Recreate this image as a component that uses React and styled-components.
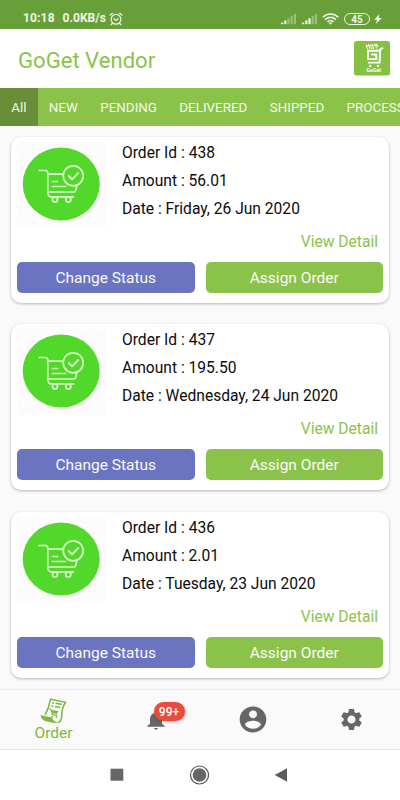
import React, { useState } from "react";
import styled, { createGlobalStyle } from "styled-components";

const GlobalStyle = createGlobalStyle`
  body {
    margin: 0;
    background: #fafafa;
    font-family: Roboto, "Liberation Sans", sans-serif;
  }

  * {
    box-sizing: border-box;
  }

  button {
    border: none;
    padding: 0;
    background: none;
    font-family: inherit;
    cursor: pointer;
  }
`;

const Screen = styled.div`
  display: flex;
  flex-direction: column;
  width: 400px;
  height: 800px;
  overflow: hidden;
  background: #fafafa;
`;

const StatusBar = styled.div`
  display: flex;
  justify-content: space-between;
  flex: none;
  height: 29px;
  padding: 8px 18px 0 23px;
  background: #689f38;
  color: #eef7e4;
  font-size: 12px;
  font-weight: 700;
  line-height: 21px;

  svg {
    display: block;
  }
`;

const StatusGroup = styled.div`
  display: flex;
  align-items: center;
  height: 21px;
`;

const Clock = styled.span`
  width: 39.5px;
  letter-spacing: 0.15px;
`;

const NetSpeed = styled.span`
  width: 46.5px;
  letter-spacing: 0.05px;
  white-space: nowrap;
`;

const Header = styled.header`
  display: flex;
  align-items: center;
  justify-content: space-between;
  flex: none;
  height: 59px;
  padding: 0 10px 0 18px;
  background: #fff;

  h1 {
    margin: 2px 0 0;
    color: #8bc34a;
    font-size: 22.1px;
    font-weight: 400;
  }
`;

const Tabs = styled.nav`
  display: flex;
  flex: none;
  height: 38px;
  overflow: hidden;
  background: #8bc34a;
`;

const Tab = styled.button`
  flex: none;
  padding: 1px 11.2px 0;
  background: ${(props) => (props.$active ? "#688f38" : "transparent")};
  color: #f3faea;
  font-size: 13.4px;
`;

const Orders = styled.main`
  display: flex;
  flex-direction: column;
  gap: 21.4px;
  flex: 1;
  min-height: 0;
  padding: 11px 11px 0;
  overflow: hidden;
`;

const Card = styled.article`
  flex: none;
  height: 166px;
  padding: 5px 6px 0;
  border-radius: 10px;
  background: #fff;
  box-shadow: 0 1px 3px rgba(0, 0, 0, 0.28);
`;

const Summary = styled.div`
  display: flex;
  height: 86px;
`;

const Thumb = styled.div`
  width: 89px;
  height: 86px;
  background: repeating-linear-gradient(
    135deg,
    #fdfdfd 0 2px,
    #fafafa 2px 3px
  );

  svg {
    display: block;
  }
`;

const Details = styled.div`
  margin: -3px 0 0 16px;
  color: #0c0c0c;
  font-size: 15.6px;
  white-space: nowrap;

  p {
    margin: 0;
    line-height: 28px;
  }
`;

const DetailLink = styled.button`
  display: block;
  margin: 0 5px 0 auto;
  height: 28px;
  color: #8bc34a;
  font-size: 15.6px;
`;

const Actions = styled.div`
  display: grid;
  grid-template-columns: 1fr 1fr;
  gap: 11px;
  margin-top: 6px;
`;

const ActionButton = styled.button`
  height: 31px;
  padding-top: 1px;
  border-radius: 5px;
  background: ${(props) => (props.$primary ? "#8bc34a" : "#6b74c1")};
  color: #fafafa;
  font-size: 15.5px;
`;

const BottomNav = styled.nav`
  display: grid;
  grid-template-columns: 107px 97px 98px 98px;
  flex: none;
  height: 61px;
  border-top: 1px solid #ececec;
  border-bottom: 1px solid #e6e6e6;
  background: #fafafa;
`;

const NavItem = styled.button`
  display: flex;
  flex-direction: column;
  align-items: center;
  justify-content: center;
  color: ${(props) => (props.$active ? "#7cbb3f" : "#666")};
  font-size: 15.5px;

  svg {
    display: block;
  }
`;

const BellWrap = styled.span`
  position: relative;
`;

const Badge = styled.span`
  position: absolute;
  left: 7px;
  top: -8px;
  width: 31px;
  height: 19px;
  border-radius: 10px;
  background: #e74c3c;
  box-shadow: 1px 1px 3px rgba(0, 0, 0, 0.25);
  color: #fff;
  font-size: 12px;
  font-weight: 500;
  line-height: 20px;
  text-align: center;
`;

const SystemBar = styled.div`
  display: flex;
  align-items: center;
  flex: none;
  gap: 65px;
  height: 50px;
  padding-left: 110px;
  background: #fff;
`;

function AlarmIcon() {
  return (
    <svg width="14" height="14" viewBox="0 0 14 14" fill="none" stroke="currentColor" strokeWidth="1.2" strokeLinecap="round">
      <circle cx="7" cy="7.3" r="4.9" />
      <path d="M1 3.2 3.4 1.3M13 3.2l-2.4-1.9M4.8 6.8 7 8.4l2.2-1.6M3.2 11.5l-1 1.2M10.8 11.5l1 1.2" />
    </svg>
  );
}

function SignalIcon({ bars }) {
  return (
    <svg width="21" height="12" viewBox="0 0 21 12" fill="currentColor">
      {[0, 1, 2, 3, 4].map((i) => (
        <rect
          key={i}
          x={1 + i * 3.2}
          y={9.6 - i * 2.2}
          width="2.2"
          height={1.6 + i * 2.2}
          opacity={i < bars ? 1 : 0.38}
        />
      ))}
    </svg>
  );
}

function WifiIcon() {
  return (
    <svg width="17" height="12" viewBox="0 0 17 12" fill="none" stroke="currentColor" strokeWidth="1.6">
      <path d="M.8 4.2a11 11 0 0 1 15.4 0M3.1 6.6a7.7 7.7 0 0 1 10.8 0M5.5 8.9a4.3 4.3 0 0 1 6 0" />
      <path d="M8.5 11.8 6.7 10a2.6 2.6 0 0 1 3.6 0z" fill="currentColor" stroke="none" />
    </svg>
  );
}

const Battery = styled.span`
  width: 26px;
  height: 12px;
  margin: 0 4px 0 5px;
  border: 1px solid #eef7e4;
  border-radius: 6px;
  background: linear-gradient(90deg, #689f38 60%, #4fb01e 60% 80%, #689f38 80%);
  font-size: 10px;
  line-height: 11px;
  text-align: center;
`;

function BoltIcon() {
  return (
    <svg width="8" height="10" viewBox="0 0 8 10" fill="currentColor">
      <path d="M5.4 0 .3 5.8h2.8L1.8 10l6-6H4.7z" />
    </svg>
  );
}

function Logo() {
  return (
    <svg width="36" height="35" viewBox="0 0 36 35">
      <rect width="36" height="34.5" rx="2.5" fill="#86c144" />
      <g fill="none" stroke="#fff">
        <path d="M29 6.9 26.2 8.3 25.6 21.6H14" strokeWidth="1.9" />
        <path d="M26 9.8H14v8.3h8.300v-4.600h-5" strokeWidth="1.9" />
        <path d="m12 3.5 1.5 4.5M14.5 3l1.3 5M16.5 5.5 18.2 8M18 2.8l1.7 5M20.5 3.2l2.5 4.5M22.6 2.8 24 6M12 5.5l3-1.5 3 .8 3-1.3 3 1.5" strokeWidth="1" />
      </g>
      <circle cx="16.2" cy="25" r="1.2" fill="#fff" />
      <circle cx="24" cy="25" r="1.2" fill="#fff" />
      <text x="19.8" y="31.3" fill="#fff" fontSize="5.2" fontWeight="700" textAnchor="middle">
        GoGet
      </text>
    </svg>
  );
}

function CartIcon() {
  return (
    <svg width="89" height="86" viewBox="0 0 89 86">
      <ellipse cx="44.2" cy="42" rx="38.5" ry="36.4" fill="#51d82a" />
      <g fill="none" stroke="#d9f7c8" strokeWidth="1.7" strokeLinecap="round" strokeLinejoin="round">
        <path d="M22 28.5h7.3l1.5 1.7v20.500q.3 4.200 4 4.200h21.600" />
        <path d="M31 32.2h14.5M31.5 50h26l1.2-1.6L60 42.6" />
        <path d="M35.5 39.5h5M35.5 44.5h13" />
        <circle cx="38" cy="57.5" r="2.5" />
        <circle cx="51.3" cy="57.5" r="2.5" />
        <circle cx="56.2" cy="33.8" r="10" />
        <path d="m51.7 34 3.4 3.4 6-6.3" strokeWidth="2" />
      </g>
    </svg>
  );
}

function OrderIcon() {
  return (
    <svg width="27" height="26" viewBox="0 0 27 26">
      <g fill="none" stroke="currentColor" strokeLinejoin="round">
        <path d="M5.2 17Q9 10 10.4 1.3L25.5 4.2Q21.8 10 21.8 16.5 21.5 24.3 18 24.2" strokeWidth="1.6" />
        <path d="m12.3 4.7 1.8.4M15.7 5.3l6 1.1M11.5 7.9l1.800.4M14.800 8.500l5.400 1" strokeWidth="1.6" />
        <path d="m9.2 11 1.7.5 1.7 5.2 4.7.6" strokeWidth="1.2" />
      </g>
      <path d="m11.3 12 7 .9-1.2 3-4.8-.6z" fill="currentColor" />
      <circle cx="12.3" cy="18.6" r=".9" fill="currentColor" />
      <circle cx="16.4" cy="19" r=".9" fill="currentColor" />
      <path d="M.4 17q4.5 1.5 11.8 2.4.8 4 6.3 5.5-5 .4-9.5-.9Q1.5 23 .4 17z" fill="currentColor" />
    </svg>
  );
}

function BellIcon() {
  return (
    <svg width="18" height="20" viewBox="0 0 18 20" fill="currentColor">
      <path d="M9 1.2c-.8 0-1.3.5-1.3 1.2v.7C4.7 3.8 3 6.2 3 9.2v4.5L.3 16v.8h17.4V16L15 13.7V9.2c0-3-1.7-5.4-4.7-6.1v-.7c0-.7-.5-1.2-1.3-1.2z" />
      <path d="M7.2 18h3.6c0 1-.8 1.7-1.8 1.7S7.2 19 7.2 18z" />
    </svg>
  );
}

function AccountIcon() {
  return (
    <svg width="32" height="31" viewBox="0 0 24 24" preserveAspectRatio="none" fill="currentColor">
      <path d="M12 2C6.48 2 2 6.48 2 12s4.48 10 10 10 10-4.48 10-10S17.52 2 12 2zm0 3c1.66 0 3 1.34 3 3s-1.34 3-3 3-3-1.34-3-3 1.34-3 3-3zm0 14.2c-2.5 0-4.71-1.28-6-3.22.03-1.99 4-3.08 6-3.08 1.99 0 5.97 1.09 6 3.08-1.29 1.94-3.5 3.22-6 3.22z" />
    </svg>
  );
}

function SettingsIcon() {
  return (
    <svg width="25" height="25" viewBox="0 0 24 24" fill="currentColor">
      <path d="M19.43 12.98c.04-.32.07-.64.07-.98s-.03-.66-.07-.98l2.11-1.65c.19-.15.24-.42.12-.64l-2-3.46c-.12-.22-.39-.3-.61-.22l-2.49 1c-.52-.4-1.08-.73-1.69-.98l-.38-2.65C14.46 2.18 14.25 2 14 2h-4c-.25 0-.46.18-.49.42l-.38 2.65c-.61.25-1.17.59-1.69.98l-2.49-1c-.23-.09-.49 0-.61.22l-2 3.46c-.13.22-.07.49.12.64l2.11 1.65c-.04.32-.07.65-.07.98s.03.66.07.98l-2.11 1.65c-.19.15-.24.42-.12.64l2 3.46c.12.22.39.3.61.22l2.49-1c.52.4 1.08.73 1.69.98l.38 2.65c.03.24.24.42.49.42h4c.25 0 .46-.18.49-.42l.38-2.65c.61-.25 1.17-.59 1.69-.98l2.49 1c.23.09.49 0 .61-.22l2-3.46c.12-.22.07-.49-.12-.64l-2.11-1.65zM12 15.9c-2.15 0-3.9-1.75-3.9-3.9s1.75-3.9 3.9-3.9 3.9 1.75 3.9 3.9-1.75 3.9-3.9 3.9z" />
    </svg>
  );
}

const statuses = ["All", "NEW", "PENDING", "DELIVERED", "SHIPPED", "PROCESSING"];

const orders = [
  { id: 438, amount: "56.01", date: "Friday, 26 Jun 2020" },
  { id: 437, amount: "195.50", date: "Wednesday, 24 Jun 2020" },
  { id: 436, amount: "2.01", date: "Tuesday, 23 Jun 2020" },
];

function OrderCard({ order }) {
  return (
    <Card>
      <Summary>
        <Thumb>
          <CartIcon />
        </Thumb>
        <Details>
          <p>Order Id : {order.id}</p>
          <p>Amount : {order.amount}</p>
          <p>Date : {order.date}</p>
        </Details>
      </Summary>
      <DetailLink>View Detail</DetailLink>
      <Actions>
        <ActionButton>Change Status</ActionButton>
        <ActionButton $primary>Assign Order</ActionButton>
      </Actions>
    </Card>
  );
}

function App() {
  const [status, setStatus] = useState("All");

  return (
    <Screen>
      <GlobalStyle />
      <StatusBar>
        <StatusGroup>
          <Clock>10:18</Clock>
          <NetSpeed>0.0KB/s</NetSpeed>
          <AlarmIcon />
        </StatusGroup>
        <StatusGroup>
          <SignalIcon bars={2} />
          <SignalIcon bars={3} />
          <WifiIcon />
          <Battery>45</Battery>
          <BoltIcon />
        </StatusGroup>
      </StatusBar>
      <Header>
        <h1>GoGet Vendor</h1>
        <Logo />
      </Header>
      <Tabs>
        {statuses.map((name) => (
          <Tab key={name} $active={name === status} onClick={() => setStatus(name)}>
            {name}
          </Tab>
        ))}
      </Tabs>
      <Orders>
        {orders.map((order) => (
          <OrderCard key={order.id} order={order} />
        ))}
      </Orders>
      <BottomNav>
        <NavItem $active>
          <OrderIcon />
          Order
        </NavItem>
        <NavItem>
          <BellWrap>
            <BellIcon />
            <Badge>99+</Badge>
          </BellWrap>
        </NavItem>
        <NavItem>
          <AccountIcon />
        </NavItem>
        <NavItem>
          <SettingsIcon />
        </NavItem>
      </BottomNav>
      <SystemBar>
        <svg width="14" height="14" viewBox="0 0 14 14">
          <rect x=".5" y=".7" width="12.8" height="12" fill="#666" />
        </svg>
        <svg width="20" height="20" viewBox="0 0 20 20">
          <circle cx="10.5" cy="10" r="9" fill="none" stroke="#555" strokeWidth="1.2" />
          <circle cx="10.5" cy="10" r="6.8" fill="#666" />
        </svg>
        <svg width="14" height="14" viewBox="0 0 14 14">
          <path d="M.7 7 13 .2v13.6z" fill="#5c5c5c" />
        </svg>
      </SystemBar>
    </Screen>
  );
}

export default App;
